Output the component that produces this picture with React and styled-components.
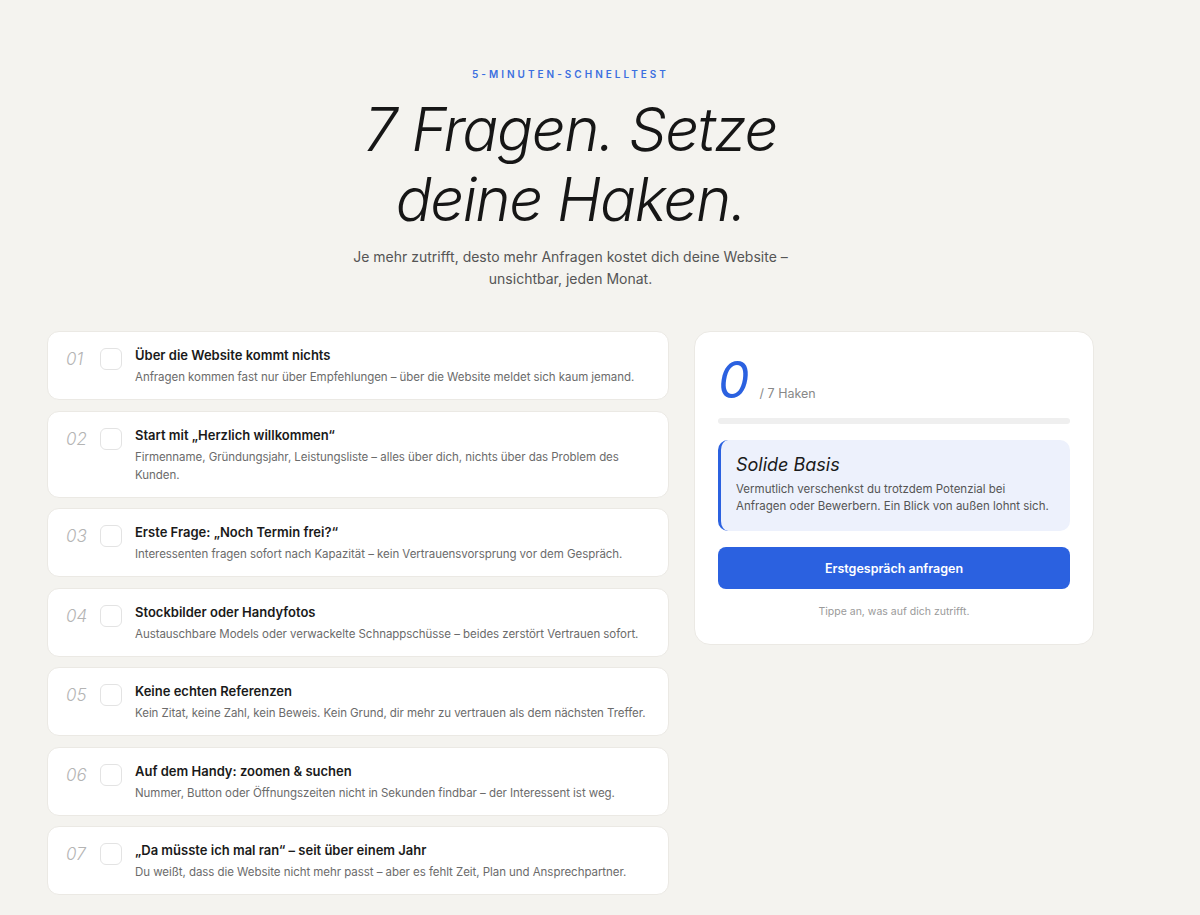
import { useState } from "react";
import styled, { createGlobalStyle } from "styled-components";

const GlobalStyle = createGlobalStyle`
  body {
    margin: 0;
    background: #f4f3ef;
    font-family: Inter, "Noto Sans", Arial, sans-serif;
    color: #1a1a1a;
  }
`;

const Page = styled.main`
  padding: 68px 0 20px 47px;
  width: 1047px;
`;

const Header = styled.header`
  text-align: center;
  margin-bottom: 41px;
`;

const Eyebrow = styled.div`
  font-size: 10px;
  font-weight: 600;
  letter-spacing: 3px;
  color: #3b6fe0;
  margin-bottom: 14px;
`;

const Title = styled.h1`
  margin: 0 auto;
  font-size: 60px;
  line-height: 70px;
  font-weight: 300;
  font-style: italic;
  letter-spacing: -1.5px;
  color: #161616;
  max-width: 460px;
`;

const Lead = styled.p`
  margin: 12px auto 0;
  font-size: 14px;
  line-height: 22px;
  color: #555;
  max-width: 460px;
`;

const Grid = styled.div`
  display: grid;
  grid-template-columns: 622px 400px;
  gap: 25px;
  align-items: start;
`;

const List = styled.div`
  display: flex;
  flex-direction: column;
  gap: 10.5px;
`;

const Item = styled.div`
  display: flex;
  align-items: flex-start;
  background: #fff;
  border: 1px solid #ebe9e4;
  border-radius: 12px;
  padding: 14px 12px 13px 18px;
  cursor: pointer;
`;

const Num = styled.span`
  width: 20px;
  margin-top: 3px;
  margin-right: 14px;
  font-size: 17px;
  font-style: italic;
  font-weight: 300;
  color: #b4b4b4;
`;

const Box = styled.span`
  flex: none;
  width: 20px;
  height: 20px;
  margin-top: 2px;
  margin-right: 13px;
  border: 1px solid ${(p) => (p.$on ? "#2b61e0" : "#e3e3e3")};
  background: ${(p) => (p.$on ? "#2b61e0" : "#fff")};
  border-radius: 6px;
  display: flex;
  align-items: center;
  justify-content: center;
`;

const Text = styled.div`
  display: flex;
  flex-direction: column;
  gap: 4px;
`;

const ItemTitle = styled.div`
  font-size: 13px;
  line-height: 18px;
  font-weight: 600;
  color: #1a1a1a;
`;

const ItemDesc = styled.div`
  font-size: 11.5px;
  line-height: 18px;
  letter-spacing: -0.05px;
  color: #6b6b6b;
`;

const Panel = styled.aside`
  background: #fff;
  border: 1px solid #ebe9e4;
  border-radius: 16px;
  padding: 20px 23px 26px;
`;

const Score = styled.div`
  display: flex;
  align-items: baseline;
  gap: 10px;
`;

const Count = styled.span`
  font-size: 50px;
  line-height: 56px;
  font-style: italic;
  font-weight: 400;
  color: #2b61e0;
`;

const Of = styled.span`
  font-size: 12.5px;
  color: #888;
`;

const Track = styled.div`
  height: 6px;
  border-radius: 3px;
  background: #efefef;
  margin: 10px 0 16px;
  overflow: hidden;
`;

const Fill = styled.div`
  height: 100%;
  background: #2b61e0;
`;

const Verdict = styled.div`
  background: #edf1fc;
  border-left: 3px solid #2b61e0;
  border-radius: 10px;
  padding: 14px 16px 16px 15px;
`;

const VerdictTitle = styled.div`
  font-size: 18px;
  font-style: italic;
  font-weight: 400;
  color: #1a1a1a;
  margin-bottom: 6px;
`;

const VerdictText = styled.div`
  font-size: 11.5px;
  line-height: 17px;
  color: #555;
`;

const Button = styled.button`
  display: block;
  width: 100%;
  height: 42px;
  margin-top: 16px;
  border: none;
  border-radius: 8px;
  background: #2b61e0;
  color: #fff;
  font-family: inherit;
  font-size: 12.5px;
  font-weight: 600;
  cursor: pointer;
`;

const Hint = styled.div`
  margin-top: 16px;
  text-align: center;
  font-size: 10.5px;
  color: #9a9a9a;
`;

const questions = [
  ["Über die Website kommt nichts", "Anfragen kommen fast nur über Empfehlungen – über die Website meldet sich kaum jemand."],
  ["Start mit „Herzlich willkommen“", "Firmenname, Gründungsjahr, Leistungsliste – alles über dich, nichts über das Problem des Kunden."],
  ["Erste Frage: „Noch Termin frei?“", "Interessenten fragen sofort nach Kapazität – kein Vertrauensvorsprung vor dem Gespräch."],
  ["Stockbilder oder Handyfotos", "Austauschbare Models oder verwackelte Schnappschüsse – beides zerstört Vertrauen sofort."],
  ["Keine echten Referenzen", "Kein Zitat, keine Zahl, kein Beweis. Kein Grund, dir mehr zu vertrauen als dem nächsten Treffer."],
  ["Auf dem Handy: zoomen & suchen", "Nummer, Button oder Öffnungszeiten nicht in Sekunden findbar – der Interessent ist weg."],
  ["„Da müsste ich mal ran“ – seit über einem Jahr", "Du weißt, dass die Website nicht mehr passt – aber es fehlt Zeit, Plan und Ansprechpartner."],
];

export default function App() {
  const [checked, setChecked] = useState([]);
  const toggle = (i) =>
    setChecked((c) => (c.includes(i) ? c.filter((x) => x !== i) : [...c, i]));

  return (
    <Page>
      <GlobalStyle />
      <Header>
        <Eyebrow>5-MINUTEN-SCHNELLTEST</Eyebrow>
        <Title>7 Fragen. Setze deine Haken.</Title>
        <Lead>
          Je mehr zutrifft, desto mehr Anfragen kostet dich deine Website – unsichtbar, jeden Monat.
        </Lead>
      </Header>
      <Grid>
        <List>
          {questions.map(([title, desc], i) => (
            <Item key={i} onClick={() => toggle(i)}>
              <Num>{String(i + 1).padStart(2, "0")}</Num>
              <Box $on={checked.includes(i)}>
                {checked.includes(i) && (
                  <svg width="12" height="12" viewBox="0 0 24 24" fill="none" stroke="#fff" strokeWidth="3" strokeLinecap="round" strokeLinejoin="round">
                    <path d="M5 12l5 5L20 7" />
                  </svg>
                )}
              </Box>
              <Text>
                <ItemTitle>{title}</ItemTitle>
                <ItemDesc>{desc}</ItemDesc>
              </Text>
            </Item>
          ))}
        </List>
        <Panel>
          <Score>
            <Count>{checked.length}</Count>
            <Of>/ 7 Haken</Of>
          </Score>
          <Track>
            <Fill style={{ width: `${(checked.length / 7) * 100}%` }} />
          </Track>
          <Verdict>
            <VerdictTitle>Solide Basis</VerdictTitle>
            <VerdictText>
              Vermutlich verschenkst du trotzdem Potenzial bei Anfragen oder Bewerbern. Ein Blick von außen lohnt sich.
            </VerdictText>
          </Verdict>
          <Button>Erstgespräch anfragen</Button>
          <Hint>Tippe an, was auf dich zutrifft.</Hint>
        </Panel>
      </Grid>
    </Page>
  );
}
